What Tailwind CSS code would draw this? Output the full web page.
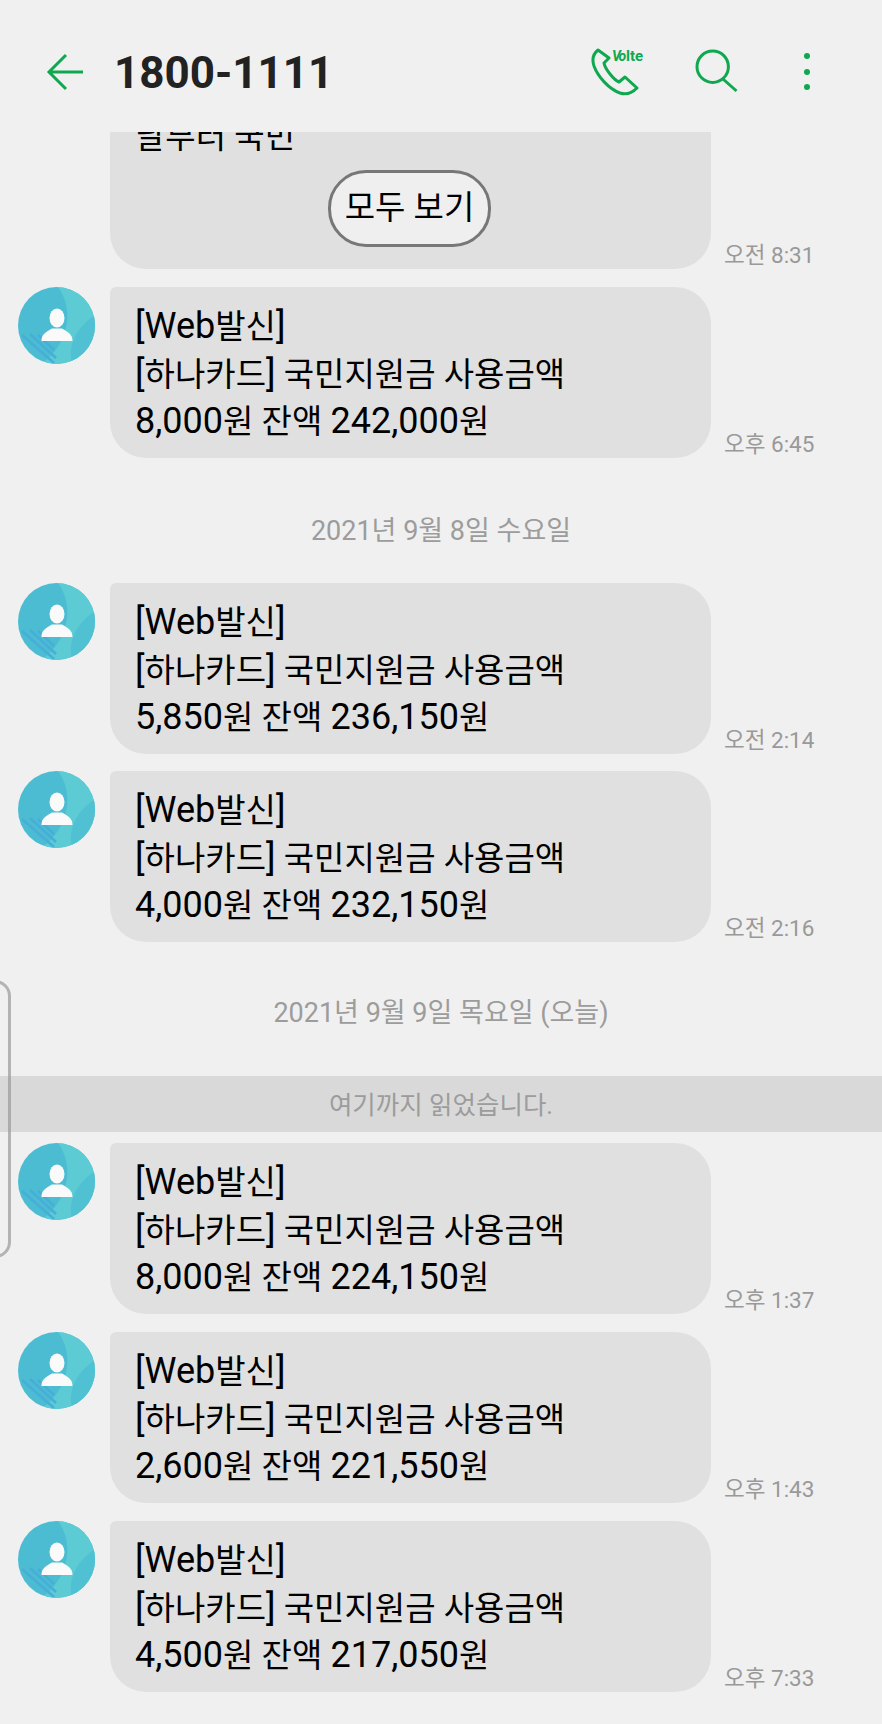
<!doctype html>
<html lang="ko">

<head>
    <meta charset="utf-8">
    <meta name="viewport" content="width=device-width, initial-scale=1.0">
    <title>1800-1111</title>
    <script src="https://cdn.jsdelivr.net/npm/@tailwindcss/browser@4"></script>
</head>

<body class="bg-[#f0f0f0] h-[1724px] overflow-hidden relative font-['Roboto','Noto_Sans_CJK_KR',sans-serif]">
    <svg class="absolute w-0 h-0">
        <symbol id="avatar" viewBox="0 0 77 77">
            <rect width="77" height="77" fill="#4cbcd2"></rect>
            <path d="M40 0C50 14 52 30 46 48C42 60 32 70 24 77H77V0Z" fill="#5ccbd4"></path>
            <path d="M54 77C50 60 56 42 77 28V77Z" fill="#50c1d3"></path>
            <path d="M4 48L36 76M12 47L38 71M20 48L36 63" stroke="#47aed8" stroke-width="2.5" fill="none"></path>
            <ellipse cx="39" cy="31" rx="7.5" ry="9.5" fill="#fafafa"></ellipse>
            <path d="M23.5 54C23.5 47 28 45 34 41.5H44C50 45 54.5 47 54.5 54Z" fill="#fafafa"></path>
        </symbol>
    </svg>

    <!-- Header -->
    <header class="relative z-10 h-[132px] bg-[#f0f0f0] flex items-center">
        <svg class="ml-[46px] w-[38px] h-[38px] mt-[11px] shrink-0" viewBox="0 0 38 38" fill="none" stroke="#0fa84f" stroke-width="3">
            <path d="M20 2L3 19L20 36M3 19H37"></path>
        </svg>
        <h1 class="ml-[30px] mt-[13px] text-[44px] leading-none font-bold text-[#222]">1800-1111</h1>
        <svg class="absolute left-[590px] top-[44px] w-[60px] h-[54px]" viewBox="0 0 60 54" fill="none" stroke="#0fa84f" stroke-width="3">
            <path d="M8 6C3 10 2 16 4 22C8 33 19 45 30 49C36 51 42 49 47 44L35 33L29 38C24 36 15 25 14 19L19 14Z" stroke-linejoin="round"></path>
            <text x="22" y="17" font-size="14" font-weight="700" font-family="Roboto" fill="#0fa84f" stroke="none" font-style="italic" letter-spacing="-2">Vo</text>
            <text x="36" y="17" font-size="15" font-weight="700" font-family="Roboto" fill="#0fa84f" stroke="none">lte</text>
        </svg>
        <svg class="absolute left-[690px] top-[44px] w-[50px] h-[50px]" viewBox="0 0 50 50" fill="none" stroke="#0fa84f" stroke-width="3">
            <circle cx="22.7" cy="22.7" r="15.7"></circle>
            <path d="M33 35L46.5 47"></path>
        </svg>
        <svg class="absolute left-[799px] top-[50px] w-[16px] h-[44px]" viewBox="0 0 16 44" fill="#0fa84f">
            <circle cx="8" cy="6" r="3"></circle>
            <circle cx="8" cy="22" r="3"></circle>
            <circle cx="8" cy="37" r="3"></circle>
        </svg>
    </header>

    <!-- Message list -->
    <main class="h-[1592px] overflow-hidden text-black">
        <!-- Clipped message above the fold -->
        <div class="flex items-end mt-[-60px]">
            <div class="ml-[110px] w-[601px] h-[197px] bg-[#e0e0e0] rounded-[36px] rounded-tl-[6px] pl-[25px] pt-[41px] text-[33px] leading-[47.5px]">
                <p>날부터 국민</p>
                <div class="flex justify-center mt-[9px]">
                    <span class="w-[163px] h-[77px] rounded-[38px] border-[3px] border-[#777] bg-[#efefef] flex items-center justify-center mr-[27px]">모두 보기</span>
                </div>
            </div>
            <span class="ml-[13px] text-[22.5px] leading-[28px] text-[#999]">오전 8:31</span>
        </div>

        <div class="flex items-start mt-[18px] pl-[18px]">
            <svg class="w-[77px] h-[77px] shrink-0 rounded-full"><use href="#avatar"></use></svg>
            <div class="ml-[15px] w-[601px] h-[171px] bg-[#e0e0e0] rounded-[36px] rounded-tl-[6px] pl-[25px] pt-[16px] text-[33px] leading-[47.5px]">
                <p><span class="text-[36px]">[Web</span>발신<span class="text-[36px]">]</span></p>
                <p><span class="text-[36px]">[</span>하나카드<span class="text-[36px]">]</span> 국민지원금 사용금액</p>
                <p><span class="text-[36px]">8,000</span>원 잔액 <span class="text-[36px]">242,000</span>원</p>
            </div>
            <span class="ml-[13px] self-end text-[22.5px] leading-[28px] text-[#999]">오후 6:45</span>
        </div>

        <p class="h-[125px] flex items-center justify-center text-[27px] text-[#9c9c9c] pt-[22px]">2021년 9월 8일 수요일</p>

        <div class="flex items-start pl-[18px]">
            <svg class="w-[77px] h-[77px] shrink-0 rounded-full"><use href="#avatar"></use></svg>
            <div class="ml-[15px] w-[601px] h-[171px] bg-[#e0e0e0] rounded-[36px] rounded-tl-[6px] pl-[25px] pt-[16px] text-[33px] leading-[47.5px]">
                <p><span class="text-[36px]">[Web</span>발신<span class="text-[36px]">]</span></p>
                <p><span class="text-[36px]">[</span>하나카드<span class="text-[36px]">]</span> 국민지원금 사용금액</p>
                <p><span class="text-[36px]">5,850</span>원 잔액 <span class="text-[36px]">236,150</span>원</p>
            </div>
            <span class="ml-[13px] self-end text-[22.5px] leading-[28px] text-[#999]">오전 2:14</span>
        </div>

        <div class="flex items-start mt-[17px] pl-[18px]">
            <svg class="w-[77px] h-[77px] shrink-0 rounded-full"><use href="#avatar"></use></svg>
            <div class="ml-[15px] w-[601px] h-[171px] bg-[#e0e0e0] rounded-[36px] rounded-tl-[6px] pl-[25px] pt-[16px] text-[33px] leading-[47.5px]">
                <p><span class="text-[36px]">[Web</span>발신<span class="text-[36px]">]</span></p>
                <p><span class="text-[36px]">[</span>하나카드<span class="text-[36px]">]</span> 국민지원금 사용금액</p>
                <p><span class="text-[36px]">4,000</span>원 잔액 <span class="text-[36px]">232,150</span>원</p>
            </div>
            <span class="ml-[13px] self-end text-[22.5px] leading-[28px] text-[#999]">오전 2:16</span>
        </div>

        <p class="h-[134px] flex items-center justify-center text-[27px] text-[#9c9c9c] pt-[8px]">2021년 9월 9일 목요일 (오늘)</p>

        <div class="h-[56px] bg-[#d9d9d9] flex items-center justify-center text-[25.5px] text-[#9c9c9c] pt-[2px]">여기까지 읽었습니다.</div>

        <div class="flex items-start mt-[11px] pl-[18px]">
            <svg class="w-[77px] h-[77px] shrink-0 rounded-full"><use href="#avatar"></use></svg>
            <div class="ml-[15px] w-[601px] h-[171px] bg-[#e0e0e0] rounded-[36px] rounded-tl-[6px] pl-[25px] pt-[16px] text-[33px] leading-[47.5px]">
                <p><span class="text-[36px]">[Web</span>발신<span class="text-[36px]">]</span></p>
                <p><span class="text-[36px]">[</span>하나카드<span class="text-[36px]">]</span> 국민지원금 사용금액</p>
                <p><span class="text-[36px]">8,000</span>원 잔액 <span class="text-[36px]">224,150</span>원</p>
            </div>
            <span class="ml-[13px] self-end text-[22.5px] leading-[28px] text-[#999]">오후 1:37</span>
        </div>

        <div class="flex items-start mt-[18px] pl-[18px]">
            <svg class="w-[77px] h-[77px] shrink-0 rounded-full"><use href="#avatar"></use></svg>
            <div class="ml-[15px] w-[601px] h-[171px] bg-[#e0e0e0] rounded-[36px] rounded-tl-[6px] pl-[25px] pt-[16px] text-[33px] leading-[47.5px]">
                <p><span class="text-[36px]">[Web</span>발신<span class="text-[36px]">]</span></p>
                <p><span class="text-[36px]">[</span>하나카드<span class="text-[36px]">]</span> 국민지원금 사용금액</p>
                <p><span class="text-[36px]">2,600</span>원 잔액 <span class="text-[36px]">221,550</span>원</p>
            </div>
            <span class="ml-[13px] self-end text-[22.5px] leading-[28px] text-[#999]">오후 1:43</span>
        </div>

        <div class="flex items-start mt-[18px] pl-[18px]">
            <svg class="w-[77px] h-[77px] shrink-0 rounded-full"><use href="#avatar"></use></svg>
            <div class="ml-[15px] w-[601px] h-[171px] bg-[#e0e0e0] rounded-[36px] rounded-tl-[6px] pl-[25px] pt-[16px] text-[33px] leading-[47.5px]">
                <p><span class="text-[36px]">[Web</span>발신<span class="text-[36px]">]</span></p>
                <p><span class="text-[36px]">[</span>하나카드<span class="text-[36px]">]</span> 국민지원금 사용금액</p>
                <p><span class="text-[36px]">4,500</span>원 잔액 <span class="text-[36px]">217,050</span>원</p>
            </div>
            <span class="ml-[13px] self-end text-[22.5px] leading-[28px] text-[#999]">오후 7:33</span>
        </div>
    </main>

    <!-- Edge panel handle, overlays the list -->
    <div class="absolute left-[-21px] top-[980px] w-[32px] h-[278px] rounded-[28px] border-[3px] border-[#999]/70"></div>
</body>

</html>
